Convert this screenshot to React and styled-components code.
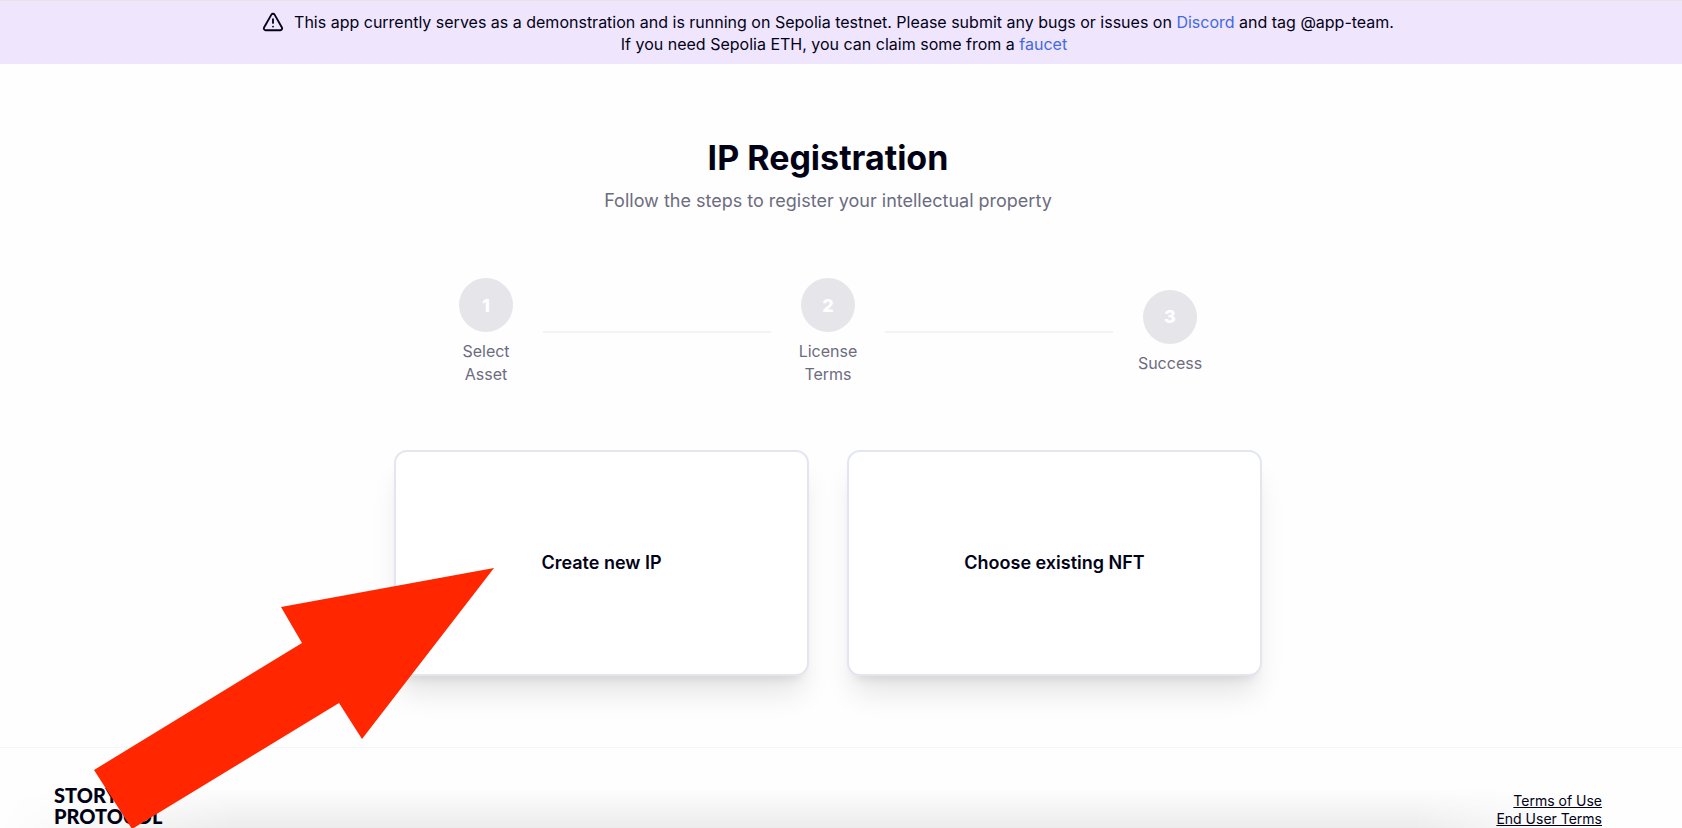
import React from "react";
import styled, { createGlobalStyle } from "styled-components";
import { TriangleAlert } from "lucide-react";

const GlobalStyle = createGlobalStyle`
  *, *::before, *::after { box-sizing: border-box; }
  body {
    margin: 0;
    background: #fefefe;
    color: #020217;
    font-family: Inter, "Liberation Sans", sans-serif;
    font-size: 16px;
    line-height: 23px;
  }
  h1, p, ol { margin: 0; padding: 0; }
`;

const Page = styled.div`
  position: relative;
  min-height: 100vh;
  display: flex;
  flex-direction: column;
`;

const Banner = styled.aside`
  display: flex;
  justify-content: center;
  gap: 10px;
  padding: 10px 26px 9px 0;
  border-top: 1px solid #e4e2ea;
  background: #efe5fd;
  line-height: 22px;
  text-align: center;
`;

const BannerLink = styled.a`
  color: #4169e1;
  text-decoration: none;
`;

const Main = styled.main`
  display: flex;
  flex-direction: column;
  align-items: center;
  padding: 72px 26px 71px 0;
`;

const Title = styled.h1`
  font-size: 34px;
  font-weight: 700;
  line-height: 44px;
`;

const Subtitle = styled.p`
  margin-top: 8px;
  font-size: 18px;
  line-height: 26px;
  color: #6c6c80;
`;

const Steps = styled.ol`
  display: flex;
  align-items: center;
  width: 100%;
  max-width: 798px;
  margin-top: 64px;
  list-style: none;
`;

const Step = styled.li`
  display: flex;
  flex-direction: column;
  align-items: center;
  gap: 8px;
  width: 114px;
  padding: 0 24px;
  color: #6c6c80;
  text-align: center;
`;

const StepNumber = styled.span`
  display: flex;
  align-items: center;
  justify-content: center;
  width: 54px;
  height: 54px;
  border-radius: 50%;
  background: #e5e5ea;
  color: #fff;
  font-size: 18px;
  font-weight: 800;
`;

const StepLine = styled.li`
  flex: 1;
  height: 2px;
  background: #f3f3f5;
`;

const Cards = styled.div`
  display: grid;
  grid-template-columns: 1fr 1fr;
  gap: 38px;
  width: 100%;
  max-width: 868px;
  margin-top: 64px;
`;

const Card = styled.button`
  height: 226px;
  border: 2px solid #e3e5f0;
  border-radius: 13px;
  background: #fff;
  color: inherit;
  font: 600 18px/26px Inter, "Liberation Sans", sans-serif;
  cursor: pointer;
  box-shadow: 0 23px 29px -6px rgba(0, 0, 0, 0.1), 0 9px 11px -7px rgba(0, 0, 0, 0.1);
`;

const Footer = styled.footer`
  display: flex;
  flex: 1 0 auto;
  justify-content: space-between;
  align-items: flex-start;
  padding: 37px 80px 0 54px;
  border-top: 1px solid #f6f6f8;
`;

const Wordmark = styled.a`
  display: flex;
  flex-direction: column;
  color: inherit;
  font-family: Lato, Inter, sans-serif;
  font-size: 20px;
  font-weight: 900;
  line-height: 21px;
  text-decoration: none;
`;

const FooterLinks = styled.nav`
  display: flex;
  flex-direction: column;
  align-items: flex-end;
  padding-top: 7px;
  font-size: 14px;
  line-height: 18px;
`;

const FooterLink = styled.a`
  color: inherit;
`;

const BottomShade = styled.div`
  position: absolute;
  inset: auto 0 0 0;
  height: 40px;
  background: linear-gradient(to bottom, rgba(0, 0, 0, 0), rgba(0, 0, 0, 0.07));
  mask-image: linear-gradient(to right, transparent, #000 14%, #000 84%, transparent 94%);
  pointer-events: none;
`;

const Pointer = styled.svg`
  position: absolute;
  left: 94px;
  bottom: 0;
  width: 400px;
  height: 260px;
  pointer-events: none;
`;

const steps = ["Select Asset", "License Terms", "Success"];
const choices = ["Create new IP", "Choose existing NFT"];

export default function App() {
  return (
    <>
      <GlobalStyle />
      <Page>
        <Banner>
          <TriangleAlert size={22} strokeWidth={2} aria-hidden="true" />
          <p>
            This app currently serves as a demonstration and is running on Sepolia testnet. Please
            submit any bugs or issues on <BannerLink href="#discord">Discord</BannerLink> and tag
            @app-team.
            <br />
            If you need Sepolia ETH, you can claim some from a{" "}
            <BannerLink href="#faucet">faucet</BannerLink>
          </p>
        </Banner>
        <Main>
          <Title>IP Registration</Title>
          <Subtitle>Follow the steps to register your intellectual property</Subtitle>
          <Steps>
            {steps.map((label, i) => (
              <React.Fragment key={label}>
                {i > 0 && <StepLine aria-hidden="true" />}
                <Step>
                  <StepNumber>{i + 1}</StepNumber>
                  <span>{label}</span>
                </Step>
              </React.Fragment>
            ))}
          </Steps>
          <Cards>
            {choices.map((label) => (
              <Card key={label} type="button">{label}</Card>
            ))}
          </Cards>
        </Main>
        <Footer>
          <Wordmark href="#home">
            <span>STORY</span>
            <span>PROTOCOL</span>
          </Wordmark>
          <FooterLinks aria-label="Legal">
            <FooterLink href="#terms">Terms of Use</FooterLink>
            <FooterLink href="#end-user-terms">End User Terms</FooterLink>
          </FooterLinks>
        </Footer>
        <BottomShade />
        <Pointer viewBox="0 0 400 260" aria-hidden="true">
          <path fill="#ff2600" d="M0 202 L208 75 L187 39 L400 0 L268 171 L245 135 L38 261 Z" />
        </Pointer>
      </Page>
    </>
  );
}
